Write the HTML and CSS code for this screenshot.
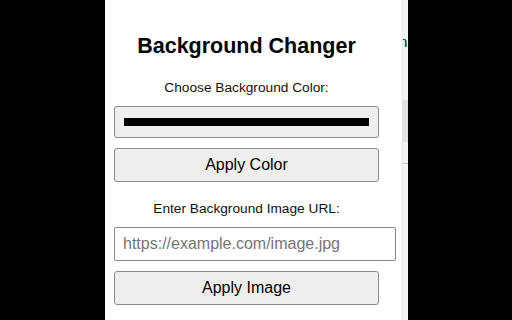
FILE: index.html
```html
<!DOCTYPE html>
<html lang="en">
<head>
<meta charset="utf-8">
<title>Background Changer</title>
<link rel="stylesheet" href="styles.css">
</head>
<body>
<div class="screen">
  <div class="side-left"></div>
  <main class="popup">
    <h2 class="title">Background Changer</h2>
    <label class="label" for="color">Choose Background Color:</label>
    <input class="color" id="color" type="color" value="#000000">
    <button class="btn btn-color" type="button">Apply Color</button>
    <label class="label label-url" for="url">Enter Background Image URL:</label>
    <input class="url" id="url" type="text" placeholder="https://example.com/image.jpg">
    <button class="btn btn-image" type="button">Apply Image</button>
  </main>
  <div class="behind">
    <span class="behind-text">n</span>
    <div class="behind-box"></div>
    <div class="behind-line"></div>
  </div>
  <div class="side-right"></div>
</div>
</body>
</html>
```
FILE: styles.css
```css
html, body {
  margin: 0;
  padding: 0;
  background: #000;
  height: 320px;
  overflow: hidden;
}
.screen {
  display: flex;
  height: 320px;
}
.side-left {
  width: 105px;
  flex: none;
  background: #000;
}
.popup {
  width: 297px;
  flex: none;
  background: #fff;
  box-sizing: border-box;
  padding: 34px 0 0 9px;
  display: flex;
  flex-direction: column;
  align-items: flex-start;
  font-family: "Liberation Sans", Arial, sans-serif;
  color: #000;
}
.title {
  margin: 0;
  width: 265px;
  text-align: center;
  font-size: 21.5px;
  line-height: 24px;
  font-weight: bold;
}
.label {
  display: block;
  width: 265px;
  text-align: center;
  font-size: 13.7px;
  line-height: 16px;
  margin-top: 22px;
  color: #111;
}
.label-url {
  margin-top: 19px;
}
.color {
  -webkit-appearance: none;
  appearance: none;
  box-sizing: border-box;
  width: 265px;
  height: 32px;
  margin: 10px 0 0;
  padding: 0;
  border: 1px solid #8a8a8a;
  border-radius: 3px;
  background: #efefef;
  cursor: pointer;
}
.color::-webkit-color-swatch-wrapper {
  padding: 11px 9px;
}
.color::-webkit-color-swatch {
  border: none;
  border-radius: 0;
}
.btn {
  box-sizing: border-box;
  width: 265px;
  height: 34px;
  margin: 10px 0 0;
  padding: 0;
  border: 1px solid #8a8a8a;
  border-radius: 3px;
  background: #efefef;
  font-family: "Liberation Sans", Arial, sans-serif;
  font-size: 16px;
  color: #000;
}
.url {
  box-sizing: border-box;
  width: 282px;
  height: 34px;
  margin: 10px 0 0;
  padding: 0 8px;
  border: 1px solid #8a8a8a;
  border-radius: 2px;
  background: #fff;
  font-family: "Liberation Sans", Arial, sans-serif;
  font-size: 16px;
  color: #000;
}
.url::placeholder {
  color: #757575;
}
.behind {
  width: 5px;
  flex: none;
  background: #f4f4f4;
  border-left: 1px solid #e6e6e6;
  overflow: hidden;
  display: flex;
  flex-direction: column;
  font-family: "Liberation Sans", Arial, sans-serif;
}
.behind-text {
  margin-top: 34px;
  margin-left: -4px;
  font-size: 15px;
  line-height: 16px;
  color: #222;
}
.behind-box {
  margin-top: 50px;
  height: 42px;
  background: #e2e2e2;
}
.behind-line {
  margin-top: 21px;
  height: 1px;
  background: #bdbdbd;
}
.side-right {
  flex: 1;
  background: #000;
}
```
